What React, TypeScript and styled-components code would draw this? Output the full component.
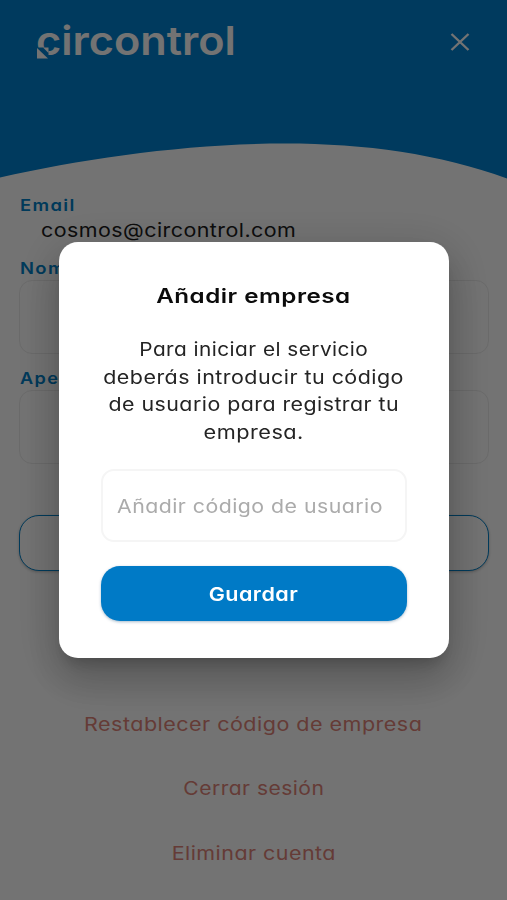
import React from "react";
import styled, { createGlobalStyle } from "styled-components";

const GlobalStyle = createGlobalStyle`
  *, *::before, *::after { box-sizing: border-box; }
  body {
    margin: 0;
    overflow: hidden;
    background: #fff;
    font-family: Inter, "Noto Sans", sans-serif;
    font-feature-settings: "cv11" 1;
  }
  button { font: inherit; font-feature-settings: inherit; cursor: pointer; }
`;

/* Extended-width text: a single line widened horizontally from a chosen side. */
const Wide = styled.span<{ $x: number; $from?: "left" | "center" }>`
  display: inline-block;
  white-space: nowrap;
  transform: scaleX(${(p) => p.$x});
  transform-origin: ${(p) => p.$from ?? "center"} center;
`;

const Screen = styled.main`
  width: 507px;
  height: 900px;
  overflow: hidden;
  display: flex;
  flex-direction: column;
  background: #fff;
`;

const Header = styled.header`
  height: 143px;
  flex: none;
  background: #0081d0;
  display: flex;
  justify-content: space-between;
  align-items: flex-start;
  padding: 17px 37px 0 36px;
`;

const Curve = styled.svg`
  display: block;
  flex: none;
  width: 507px;
  height: 36px;
`;

const Brand = styled.div`
  display: grid;
  isolation: isolate;
  color: #fff;
  font-size: 39.5px;
  font-weight: 600;
  line-height: 48px;
  & > * { grid-area: 1 / 1; }
`;

const BrandMark = styled.svg`
  width: 24px;
  height: 48px;
  z-index: 1;
`;

const CloseButton = styled.button`
  display: flex;
  border: 0;
  padding: 0;
  margin-top: 15px;
  background: none;
  color: #fff;
`;

const Form = styled.section`
  display: flex;
  flex-direction: column;
  padding: 13.5px 18px 0 19px;
`;

const Label = styled.label`
  height: 24px;
  padding-left: 1px;
  color: #0080c8;
  font-size: 16px;
  font-weight: 600;
  line-height: 24px;
  letter-spacing: 1.2px;
`;

const EmailValue = styled.div`
  height: 28px;
  margin-bottom: 11px;
  padding-left: 22px;
  color: #1c1c1c;
  font-size: 19px;
  line-height: 28px;
  letter-spacing: 0.4px;
`;

const Field = styled.div`
  height: 74px;
  margin-bottom: 12px;
  border: 1px solid #ececec;
  border-radius: 13px;
`;

const OutlineButton = styled.button`
  height: 56px;
  margin-top: 39px;
  border: 1.5px solid #0080c8;
  border-radius: 20px;
  background: #fff;
  box-shadow: 0 1px 3px rgba(0, 0, 0, 0.25);
`;

const Links = styled.nav`
  display: grid;
  grid-auto-rows: 64.5px;
  margin-top: 121px;
`;

const DangerLink = styled.button`
  border: 0;
  padding: 0;
  background: none;
  color: #e08478;
  font-size: 18.5px;
  line-height: 64px;
  letter-spacing: 0.4px;
`;

const Overlay = styled.div`
  position: fixed;
  inset: 0;
  z-index: 10;
  display: flex;
  justify-content: center;
  align-items: center;
  background: rgba(0, 0, 0, 0.55);
`;

const Dialog = styled.section`
  width: 390px;
  height: 416px;
  display: flex;
  flex-direction: column;
  align-items: stretch;
  padding: 39px 42px 0;
  border-radius: 19px;
  background: #fff;
  box-shadow: 0 11px 15px -7px rgba(0, 0, 0, 0.2),
    0 24px 38px 3px rgba(0, 0, 0, 0.14), 0 9px 46px 8px rgba(0, 0, 0, 0.14);
  letter-spacing: 0.4px;
`;

const Title = styled.h1`
  margin: 0 0 25px;
  color: #0b0b0b;
  font-size: 19.5px;
  font-weight: 600;
  line-height: 30px;
  text-align: center;
`;

const Message = styled.p`
  margin: 0 0 22.5px;
  display: flex;
  flex-direction: column;
  align-items: center;
  color: #242424;
  font-size: 18.5px;
  line-height: 27.7px;
`;

const CodeField = styled.div`
  height: 73px;
  padding-left: 14px;
  border: 2px solid #f5f5f5;
  border-radius: 13px;
  color: #ababab;
  font-size: 18.5px;
  line-height: 70px;
`;

const SaveButton = styled.button`
  height: 55px;
  margin-top: 24px;
  padding: 0;
  border: 0;
  border-radius: 19px;
  background: #007ac6;
  box-shadow: 0 1px 3px rgba(0, 60, 110, 0.35);
  color: #fff;
  font-size: 18.5px;
  font-weight: 600;
  letter-spacing: 0.4px;
`;

const messageLines = [
  { text: "Para iniciar el servicio", x: 1.125 },
  { text: "deberás introducir tu código", x: 1.16 },
  { text: "de usuario para registrar tu", x: 1.155 },
  { text: "empresa.", x: 1.175 },
];

const links = [
  { text: "Restablecer código de empresa", x: 1.165 },
  { text: "Cerrar sesión", x: 1.14 },
  { text: "Eliminar cuenta", x: 1.16 },
];

export default function App() {
  return (
    <>
      <GlobalStyle />
      <Screen>
        <Header>
          <Brand>
            <Wide $x={1.095} $from="left">circontrol</Wide>
            <BrandMark viewBox="0 0 24 48" aria-hidden="true">
              <path d="M0 30.5H12.5V42H0Z" fill="#0081d0" />
              <path d="M1 31L12 41.5H1Z" fill="#fff" />
              <path d="M7 30.5H12.5V36Z" fill="#fff" />
            </BrandMark>
          </Brand>
          <CloseButton aria-label="Cerrar">
            <svg width="20" height="20" viewBox="0 0 20 20" fill="none" stroke="currentColor" strokeWidth="2.4">
              <path d="M1.5 2 L18.5 18 M18.5 2 L1.5 18" />
            </svg>
          </CloseButton>
        </Header>
        <Curve viewBox="0 0 507 36" aria-hidden="true">
          <path d="M0 0H507V35.5C440 11 365 0.5 285 0.5C190 0.5 85 15 0 34.5Z" fill="#0081d0" />
        </Curve>
        <Form>
          <Label><Wide $x={1.15} $from="left">Email</Wide></Label>
          <EmailValue><Wide $x={1.128} $from="left">cosmos@circontrol.com</Wide></EmailValue>
          <Label><Wide $x={1.15} $from="left">Nombre</Wide></Label>
          <Field />
          <Label><Wide $x={1.13} $from="left">Apellido</Wide></Label>
          <Field />
          <OutlineButton aria-label="Continuar" />
        </Form>
        <Links>
          {links.map((l) => (
            <DangerLink key={l.text}><Wide $x={l.x}>{l.text}</Wide></DangerLink>
          ))}
        </Links>
      </Screen>
      <Overlay>
        <Dialog role="dialog" aria-modal="true">
          <Title><Wide $x={1.24}>Añadir empresa</Wide></Title>
          <Message>
            {messageLines.map((l) => (
              <Wide key={l.text} $x={l.x}>{l.text}</Wide>
            ))}
          </Message>
          <CodeField><Wide $x={1.152} $from="left">Añadir código de usuario</Wide></CodeField>
          <SaveButton><Wide $x={1.165}>Guardar</Wide></SaveButton>
        </Dialog>
      </Overlay>
    </>
  );
}
